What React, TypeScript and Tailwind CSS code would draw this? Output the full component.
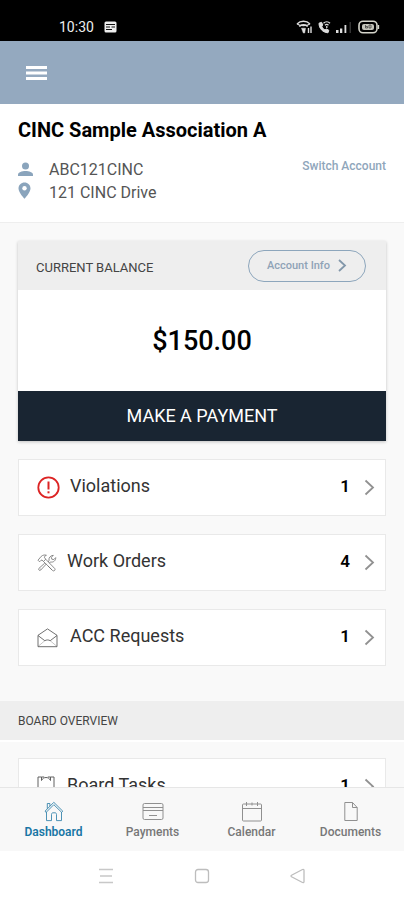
import type { ReactNode } from "react";

interface OverviewItem {
  label: string;
  count: number;
  icon: ReactNode;
  gap: string;
}

interface TabItem {
  label: string;
  icon: ReactNode;
  active?: boolean;
}

const AlertIcon = () => (
  <svg width="23" height="23" viewBox="0 0 23 23" fill="none" stroke="#dc2424" aria-hidden="true">
    <circle cx="11.5" cy="11.5" r="10.2" strokeWidth="1.8" />
    <path d="M11.5 5.5v8" strokeWidth="2" />
    <path d="M11.5 15.3v2" strokeWidth="2" />
  </svg>
);

const ToolsIcon = () => (
  <svg width="20" height="18" viewBox="0 0 20 18" fill="none" stroke="#707070" strokeWidth="0.8" strokeLinejoin="round" aria-hidden="true">
    <path d="M1 6.2 4.2 2.4C5.8.9 8 .7 9.4 1.3 8 1.8 7.2 2.6 7.5 3.7l1.3 1.5-2.4 2.3L5 6 3.9 6.4 2.6 7.8z" />
    <path d="m8.8 5.3 9 9.3c1 1.3-.9 3.1-2.1 2L6.5 7.5" />
    <path d="M11.3 7.9 12 6.5c-.5-2.6 1.3-5 4.3-5.2l-1.9 2 .4 1.9 2 .4 1.9-2c.2 2.9-2.3 5-4.9 4.4l-1.5.9" />
    <path d="m9.4 9.9-5.7 6.2c-1.1 1-2.8-.5-1.8-1.7l5.9-5.3" />
    <path d="m11 12 4 4M3 15h.5" />
  </svg>
);

const EnvelopeIcon = () => (
  <svg width="21" height="20" viewBox="0 0 21 20" fill="none" stroke="#606060" strokeWidth="0.9" strokeLinejoin="round" aria-hidden="true">
    <path d="M1 7.3v11.4h19V7.3L10.5.9z" />
    <path d="m1 7.5 6.8 5.2c1.7-1 3.7-1 5.4 0L20 7.5" />
    <path d="m1 18.5 6.8-5.8M20 18.5l-6.8-5.8" strokeOpacity="0.4" />
  </svg>
);

const TasksIcon = () => (
  <svg width="18" height="22" viewBox="0 0 18 22" fill="none" stroke="#606060" aria-hidden="true">
    <path d="M4.5 1H1v20h16V1h-3.500" />
    <path d="M4.5 4.500V1h2.700M13.500 4.500V1h-2.700M4.500 4.500C5.500 2.500 7 1.500 9 1.500s3.500 1 4.500 3" />
  </svg>
);

const HomeIcon = () => (
  <svg width="20" height="21" viewBox="0 0 20 21" fill="none" stroke="#3a87ae" strokeWidth="0.9" strokeLinejoin="round" aria-hidden="true">
    <path d="M1 10.2 9.8 1.3 18.8 10.2 17.6 11.3 9.8 3.7 2.2 11.3z" />
    <path d="M3.3 7.7V2.5h2.6v2.6M2.5 11v8.6h5v-6.2c0-1 .6-1.6 1.5-1.6h2c.9 0 1.5.6 1.5 1.6v6.2h5V11" />
  </svg>
);

const CardIcon = () => (
  <svg width="22" height="21" viewBox="0 0 22 21" fill="none" stroke="#909090" aria-hidden="true">
    <rect x="1" y="2.5" width="20" height="16" rx="1.5" />
    <path d="M1 6.5h20M1 9.5h20" />
    <path d="M7 14.5h8" />
  </svg>
);

const CalendarIcon = () => (
  <svg width="20" height="21" viewBox="0 0 20 21" fill="none" stroke="#909090" aria-hidden="true">
    <rect x="0.5" y="3" width="19" height="17" rx="1" />
    <path d="M.5 7.5h19M4.5 1v4M10 1.5v3M15.5 1v4" />
  </svg>
);

const DocumentIcon = () => (
  <svg width="14" height="21" viewBox="0 0 14 21" fill="none" stroke="#909090" aria-hidden="true">
    <path d="M.8 1.5h7.7l4.7 5v13H.8z" />
    <path d="M8.5 1.5v5h4.7" />
  </svg>
);

const items: OverviewItem[] = [
  { label: "Violations", count: 1, icon: <AlertIcon />, gap: "gap-[10px]" },
  { label: "Work Orders", count: 4, icon: <ToolsIcon />, gap: "gap-[10px]" },
  { label: "ACC Requests", count: 1, icon: <EnvelopeIcon />, gap: "gap-3" },
];

const boardItems: OverviewItem[] = [
  { label: "Board Tasks", count: 1, icon: <TasksIcon />, gap: "gap-3" },
];

const tabs: TabItem[] = [
  { label: "Dashboard", icon: <HomeIcon />, active: true },
  { label: "Payments", icon: <CardIcon /> },
  { label: "Calendar", icon: <CalendarIcon /> },
  { label: "Documents", icon: <DocumentIcon /> },
];

function StatusBar() {
  return (
    <div className="flex h-[41px] shrink-0 items-center justify-between bg-black pt-3 pr-6 pl-[59px] text-[#eee]">
      <div className="flex items-center gap-[10px]">
        <span className="text-[14px] leading-4">10:30</span>
        <svg width="13" height="12" viewBox="0 0 13 12" aria-hidden="true">
          <rect x="0.5" y="0.5" width="12" height="11" rx="1.5" fill="#eee" />
          <path d="M2 3.5h9M2 6h4M7.5 6H11M2 8.5h6" stroke="#111" strokeWidth="1.1" />
        </svg>
      </div>
      <div className="flex items-center gap-[5px]">
        <svg width="17" height="14" viewBox="0 0 17 14" fill="none" stroke="#ddd" strokeWidth="1.4" aria-hidden="true">
          <path d="M1 4C4.5.4 10.5.4 14 4M3.3 6.6c2.4-2.500 6-2.500 8.400 0M1 4c3.500 2.200 9.500 2.200 13 0" />
          <path d="M5.500 8.200h4L8.700 13H7.300z" fill="#ddd" strokeWidth="0.5" />
          <path d="M12.500 13V8M15 13V6.500" />
        </svg>
        <svg width="13" height="14" viewBox="0 0 13 14" fill="none" stroke="#ddd" aria-hidden="true">
          <path d="M1 3.200C1 8.500 4.500 12.300 10 12.800l.8-2.600-2.500-1.200-1.300 1C5.400 9 4.300 7.700 3.800 6.200l1-1.200-1.200-2.700z" fill="#ddd" />
          <path d="M5.500 3.200c1.800-1.800 4.700-1.800 6.500 0M7 5.200c1.100-1 2.400-1 3.500 0M8.800 6v2" strokeWidth="1.3" />
        </svg>
        <svg width="17" height="14" viewBox="0 0 17 14" aria-hidden="true">
          <path d="M0 10h2.500v3H0zM4 8.500h2.300V13H4zM8.500 5h1.800v8H8.500z" fill="#ddd" />
          <path d="M13.500 2H15v11h-1.500z" fill="#333" />
        </svg>
        <svg width="22" height="14" viewBox="0 0 22 14" fill="none" aria-hidden="true">
          <rect x="1" y="1.2" width="18" height="11.600" rx="4" stroke="#d5d5cb" strokeWidth="1.600" />
          <rect x="4" y="4" width="12" height="6" rx="2" fill="#c5c5bb" />
          <path d="M7.500 5v3h2V6.500h-2M11 5v3h2V5z" stroke="#333" strokeWidth="0.700" />
          <path d="M20.500 5v4" stroke="#d5d5cb" strokeWidth="1.300" />
        </svg>
      </div>
    </div>
  );
}

function ItemRow({ item }: { item: OverviewItem }) {
  return (
    <a href="#" className="flex h-[57px] items-center border border-[#e9e9e9] bg-white pr-[10px] pl-[18px]">
      <span className={`flex flex-1 items-center ${item.gap}`}>
        {item.icon}
        <span className="pb-1 text-[18px] leading-5 text-[#333]">{item.label}</span>
      </span>
      <span className="pb-1 text-[17px] leading-5 font-semibold text-black">{item.count}</span>
      <svg className="ml-[14px]" width="11" height="17" viewBox="0 0 11 17" fill="none" stroke="#919191" strokeWidth="1.8" aria-hidden="true">
        <path d="m1.500 1.500 7.500 7-7.500 7" />
      </svg>
    </a>
  );
}

export default function App() {
  return (
    <div className="flex h-screen flex-col overflow-hidden bg-[#f9f9f9] font-[Roboto,'Liberation_Sans',sans-serif]">
      <StatusBar />

      <header className="flex h-[63px] shrink-0 items-center bg-[#94a9bf] px-[26px]">
        <button type="button" aria-label="Menu">
          <svg width="21" height="16" viewBox="0 0 21 16" stroke="#fff" strokeWidth="3" aria-hidden="true">
            <path d="M0 2.500h21M0 8h21M0 13.500h21" />
          </svg>
        </button>
      </header>

      <main className="flex-1 overflow-hidden">
        <section className="border-b border-[#eee] bg-white px-[18px] pt-[14px] pb-[18px]">
          <h1 className="text-[20px] leading-6 font-bold text-black">CINC Sample Association A</h1>
          <div className="mt-4 flex items-start justify-between">
            <div className="text-[16px] leading-[23px] text-[#555]">
              <p className="flex items-center gap-4">
                <svg width="15" height="15" viewBox="0 0 15 15" fill="#8aa4bc" aria-hidden="true">
                  <circle cx="7.500" cy="4" r="3.500" />
                  <path d="M0 14v-1.500C0 10.200 4 9 7.500 9s7.500 1.200 7.500 3.500V14z" />
                </svg>
                ABC121CINC
              </p>
              <p className="flex items-center gap-4">
                <svg className="-mt-1" width="15" height="17" viewBox="0 0 15 17" aria-hidden="true">
                  <path d="M6.500.500C3.200.500.500 3 .500 6.400c0 4 6 10.300 6 10.300s6-6.300 6-10.300c0-3.400-2.700-5.900-6-5.900z" fill="#8aa4bc" />
                  <circle cx="6.500" cy="6.200" r="2.200" fill="#fff" />
                </svg>
                121 CINC Drive
              </p>
            </div>
            <a href="#" className="text-[12px] leading-4 font-medium text-[#8fa6bb]">
              Switch Account
            </a>
          </div>
        </section>

        <div className="flex flex-col gap-[18px] px-[18px] pt-[18px]">
          <section className="bg-white shadow-[0_1px_3px_rgba(0,0,0,0.22)]">
            <div className="flex h-[49px] items-center justify-between bg-[#eee] pr-5 pl-[18px]">
              <h2 className="pt-1 text-[13px] leading-4 text-[#444]">CURRENT BALANCE</h2>
              <button
                type="button"
                className="flex h-8 items-center gap-2 rounded-full border border-[#8da6bc] px-[18px] text-[11px] leading-4 font-medium text-[#8fa3b7]"
              >
                Account Info
                <svg width="9" height="13" viewBox="0 0 9 13" fill="none" stroke="#8297aa" strokeWidth="1.8" aria-hidden="true">
                  <path d="m1 1 6 5.500L1 12" />
                </svg>
              </button>
            </div>
            <p className="flex h-[101px] items-center justify-center text-[27px] leading-8 font-medium text-black">$150.00</p>
            <button type="button" className="h-[50px] w-full bg-[#192532] text-[18px] leading-6 text-white">
              MAKE A PAYMENT
            </button>
          </section>

          {items.map((item) => (
            <ItemRow key={item.label} item={item} />
          ))}
        </div>

        <h2 className="mt-[35px] flex h-[41px] items-center border-b-2 border-white bg-[#eee] px-[18px] text-[12px] leading-4 text-[#444]">
          BOARD OVERVIEW
        </h2>

        <div className="flex flex-col gap-[18px] px-[18px] pt-4">
          {boardItems.map((item) => (
            <ItemRow key={item.label} item={item} />
          ))}
        </div>
      </main>

      <nav className="grid h-16 shrink-0 grid-cols-4 border-t border-[#e6e6e6] bg-[#f8f8f8] px-1">
        {tabs.map((tab) => (
          <a
            key={tab.label}
            href="#"
            className={`flex flex-col items-center gap-[2px] pt-[13px] text-[12px] leading-4 ${
              tab.active ? "font-semibold text-[#1976a5]" : "font-medium text-[#777]"
            }`}
          >
            {tab.icon}
            {tab.label}
          </a>
        ))}
      </nav>

      <div className="flex h-[49px] shrink-0 items-center justify-center gap-20 bg-white">
        <button type="button" aria-label="Recent apps">
          <svg width="16" height="16" viewBox="0 0 16 16" stroke="#c8c8c8" strokeWidth="1.3" aria-hidden="true">
            <path d="M1 1.500h14M2 8h12M1 14.500h14" />
          </svg>
        </button>
        <button type="button" aria-label="Home">
          <svg width="16" height="16" viewBox="0 0 16 16" fill="none" stroke="#bdbdbd" strokeWidth="1.3" aria-hidden="true">
            <rect x="1.5" y="1.5" width="13" height="13" rx="2.5" />
          </svg>
        </button>
        <button type="button" aria-label="Back">
          <svg width="16" height="16" viewBox="0 0 16 16" fill="none" stroke="#bdbdbd" strokeWidth="1.3" strokeLinejoin="round" aria-hidden="true">
            <path d="M1.500 7.300 12.500 1.500q1.500-.5 1.500 1v11q0 1.500-1.500 1L1.500 8.700q-.9-.7 0-1.400z" />
          </svg>
        </button>
      </div>
    </div>
  );
}
